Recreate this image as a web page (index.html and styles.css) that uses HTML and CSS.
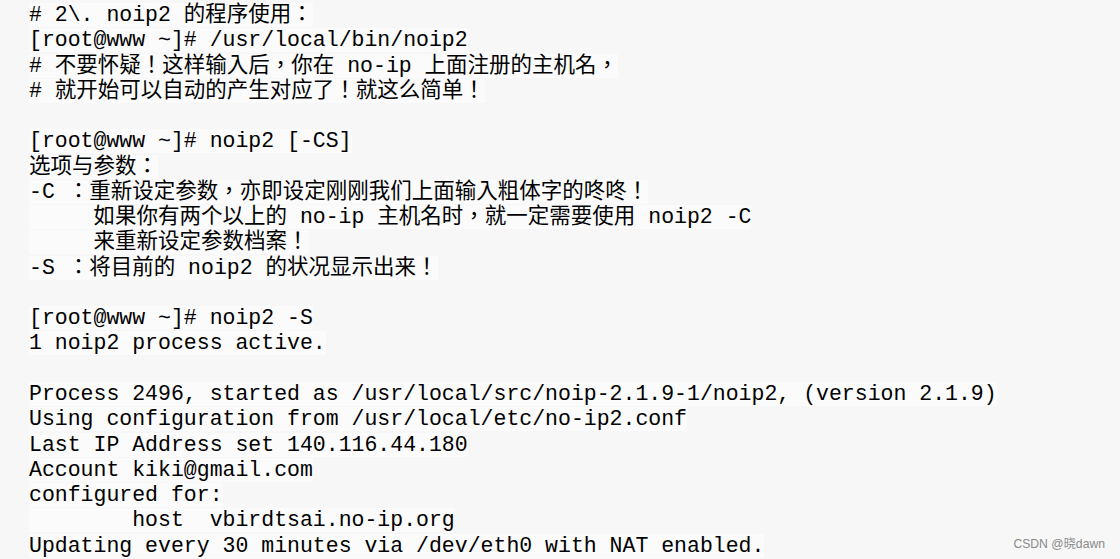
FILE: index.html
```html
<!DOCTYPE html>
<html lang="zh-CN">
<head>
<meta charset="utf-8">
<title>noip2</title>
<link rel="stylesheet" href="styles.css">
</head>
<body>
<div class="code" lang="zh-TW">
<div class="line"><span># 2\. noip2 的程序使用：</span></div>
<div class="line"><span>[root@www ~]# /usr/local/bin/noip2</span></div>
<div class="line"><span># 不要怀疑！这样输入后，你在 no-ip 上面注册的主机名，</span></div>
<div class="line"><span># 就开始可以自动的产生对应了！就这么简单！</span></div>
<div class="line"> </div>
<div class="line"><span>[root@www ~]# noip2 [-CS]</span></div>
<div class="line"><span>选项与参数：</span></div>
<div class="line"><span>-C ：重新设定参数，亦即设定刚刚我们上面输入粗体字的咚咚！</span></div>
<div class="line"><span>     如果你有两个以上的 no-ip 主机名时，就一定需要使用 noip2 -C</span></div>
<div class="line"><span>     来重新设定参数档案！</span></div>
<div class="line"><span>-S ：将目前的 noip2 的状况显示出来！</span></div>
<div class="line"> </div>
<div class="line"><span>[root@www ~]# noip2 -S</span></div>
<div class="line"><span>1 noip2 process active.</span></div>
<div class="line"> </div>
<div class="line"><span>Process 2496, started as /usr/local/src/noip-2.1.9-1/noip2, (version 2.1.9)</span></div>
<div class="line"><span>Using configuration from /usr/local/etc/no-ip2.conf</span></div>
<div class="line"><span>Last IP Address set 140.116.44.180</span></div>
<div class="line"><span>Account kiki@gmail.com</span></div>
<div class="line"><span>configured for:</span></div>
<div class="line"><span>        host  vbirdtsai.no-ip.org</span></div>
<div class="line"><span>Updating every 30 minutes via /dev/eth0 with NAT enabled.</span></div>
</div>
<div class="mark">CSDN @晓dawn</div>
</body>
</html>
```

FILE: styles.css
```css
html, body {
  margin: 0;
  padding: 0;
  background: #f7f7f7;
  width: 1120px;
  height: 559px;
  overflow: hidden;
}
body {
  position: relative;
}
.code {
  padding: 3px 0 0 29px;
  font-family: "Liberation Mono", "Noto Sans CJK TC", monospace;
  font-size: 21.5px;
  line-height: 25.27px;
  color: #000;
}
.line {
  white-space: pre;
  height: 25.27px;
}
.line span {
  background: #fbfbfb;
}
.mark {
  position: absolute;
  right: 15px;
  bottom: 7px;
  font-family: "Liberation Sans", "Noto Sans CJK SC", sans-serif;
  font-size: 12.2px;
  color: #8a8a8a;
}
```
